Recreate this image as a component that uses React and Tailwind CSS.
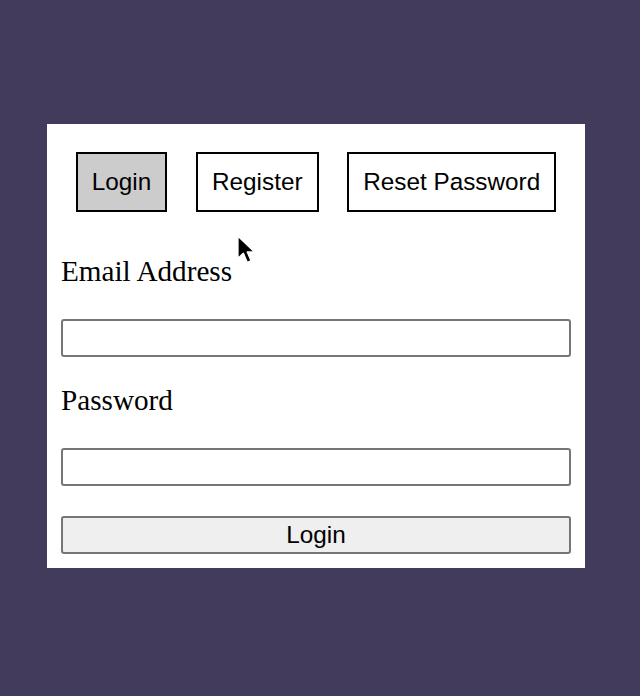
import { useState } from "react";

function Cursor() {
  return (
    <svg
      className="absolute left-[189px] top-[110px] pointer-events-none"
      width="22"
      height="32"
      viewBox="0 0 18 26"
    >
      <path
        d="M1.5 1.5 L1.5 20 L6 15.8 L9.2 23.2 L12.4 21.8 L9.3 14.6 L15.2 14.6 Z"
        fill="#000"
        stroke="#fff"
        strokeWidth="1.3"
        strokeLinejoin="round"
      />
    </svg>
  );
}

export default function App() {
  const [tab, setTab] = useState("login");
  const tabs = [
    { id: "login", label: "Login" },
    { id: "register", label: "Register" },
    { id: "reset", label: "Reset Password" },
  ];

  return (
    <div className="min-h-screen bg-[#433b5c] flex items-center justify-center pr-[8px] pb-[4px]">
      <div className="relative w-[538px] bg-white">
        <div className="flex justify-evenly pt-[28px]">
          {tabs.map((t) => (
            <button
              key={t.id}
              onClick={() => setTab(t.id)}
              className={
                "border-2 border-black px-[14px] py-[14px] text-[24.3px] leading-[28px] text-black font-['Liberation_Sans',Arial,sans-serif] " +
                (tab === t.id ? "bg-[#cccccc]" : "bg-white")
              }
            >
              {t.label}
            </button>
          ))}
        </div>
        <form
          className="flex flex-col px-[14px] pb-[14px]"
          onSubmit={(e) => e.preventDefault()}
        >
          <label className="mt-[43px] text-[29.2px] leading-[32px] text-black font-['Liberation_Serif','Times_New_Roman',serif]">
            Email Address
          </label>
          <input
            type="email"
            className="mt-[32px] h-[38px] border-2 border-[#767676] rounded-[3px] bg-white"
          />
          <label className="mt-[27px] text-[29.2px] leading-[32px] text-black font-['Liberation_Serif','Times_New_Roman',serif]">
            Password
          </label>
          <input
            type="password"
            className="mt-[32px] h-[38px] border-2 border-[#767676] rounded-[3px] bg-white"
          />
          <button
            type="submit"
            className="mt-[30px] h-[38px] border-2 border-[#767676] rounded-[3px] bg-[#efefef] text-[24.3px] leading-[28px] text-black font-['Liberation_Sans',Arial,sans-serif]"
          >
            Login
          </button>
        </form>
        <Cursor />
      </div>
    </div>
  );
}
